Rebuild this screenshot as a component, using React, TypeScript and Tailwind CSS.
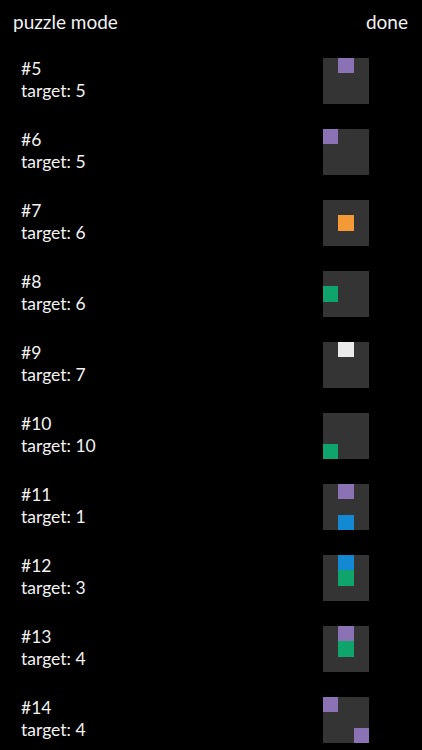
import React from "react";

type Cell = { r: number; c: number; color: string };

const P = "bg-[#8a72b5]";
const O = "bg-[#f39a37]";
const G = "bg-[#0fa46b]";
const W = "bg-[#eaeaea]";
const B = "bg-[#1389d3]";

const puzzles: { n: number; target: number; cells: Cell[] }[] = [
  { n: 5, target: 5, cells: [{ r: 0, c: 1, color: P }] },
  { n: 6, target: 5, cells: [{ r: 0, c: 0, color: P }] },
  { n: 7, target: 6, cells: [{ r: 1, c: 1, color: O }] },
  { n: 8, target: 6, cells: [{ r: 1, c: 0, color: G }] },
  { n: 9, target: 7, cells: [{ r: 0, c: 1, color: W }] },
  { n: 10, target: 10, cells: [{ r: 2, c: 0, color: G }] },
  { n: 11, target: 1, cells: [{ r: 0, c: 1, color: P }, { r: 2, c: 1, color: B }] },
  { n: 12, target: 3, cells: [{ r: 0, c: 1, color: B }, { r: 1, c: 1, color: G }] },
  { n: 13, target: 4, cells: [{ r: 0, c: 1, color: P }, { r: 1, c: 1, color: G }] },
  { n: 14, target: 4, cells: [{ r: 0, c: 0, color: P }, { r: 2, c: 2, color: P }] },
];

function Board({ cells }: { cells: Cell[] }) {
  const grid: (string | null)[] = Array(9).fill(null);
  cells.forEach((c) => (grid[c.r * 3 + c.c] = c.color));
  return (
    <div className="grid h-[46px] w-[46px] grid-cols-3 grid-rows-3 bg-[#343434]">
      {grid.map((g, i) => (
        <div key={i} className={g ?? ""} />
      ))}
    </div>
  );
}

export default function App() {
  return (
    <div
      className="h-[750px] w-[422px] overflow-hidden bg-black text-[#f2f2f2]"
      style={{ fontFamily: "Lato, 'Noto Sans', sans-serif" }}
    >
      <div className="flex h-[45px] items-start justify-between pl-[13px] pr-[14px] pt-[10px] text-[19px] leading-[24px]">
        <span>puzzle mode</span>
        <span>done</span>
      </div>
      {puzzles.map((p) => (
        <div key={p.n} className="flex h-[71px] justify-between pl-[21px] pr-[53px]">
          <div className="pt-[12.5px] text-[17.5px] leading-[22.5px]">
            <div>#{p.n}</div>
            <div>target: {p.target}</div>
          </div>
          <div className="pt-[13px]">
            <Board cells={p.cells} />
          </div>
        </div>
      ))}
    </div>
  );
}
